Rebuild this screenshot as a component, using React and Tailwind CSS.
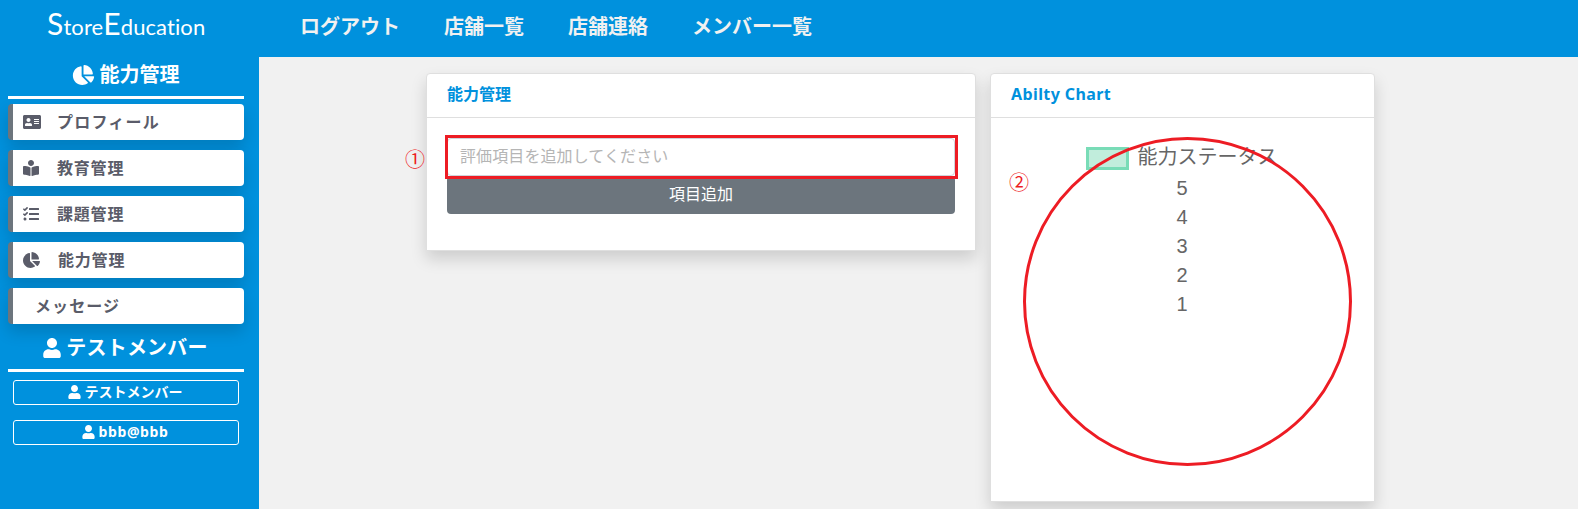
import { FaAddressCard, FaBookReader, FaTasks, FaChartPie, FaUser } from "react-icons/fa";

const NAV = ["ログアウト", "店舗一覧", "店舗連絡", "メンバー一覧"];

const MENU = [
  { label: "プロフィール", icon: <FaAddressCard className="h-4 w-[18px]" />, layout: "gap-4 pl-[10px] tracking-[1.2px]" },
  { label: "教育管理", icon: <FaBookReader className="h-4 w-4" />, layout: "gap-[18px] pl-[10px] tracking-[0.8px]" },
  { label: "課題管理", icon: <FaTasks className="h-4 w-4" />, layout: "gap-[18px] pl-[10px] tracking-[0.8px]" },
  { label: "能力管理", icon: <FaChartPie className="h-4 w-[17px]" />, layout: "gap-[18px] pl-[10px] tracking-[0.8px]" },
  { label: "メッセージ", icon: null, layout: "pl-[22px] tracking-[1.1px]" },
];

function SideHeading({ children }) {
  return (
    <h2 className="flex h-[39px] shrink-0 items-center justify-center gap-[5px] border-b-3 border-white pr-[1px] pb-[6px] text-xl leading-none font-bold text-white">
      {children}
    </h2>
  );
}

function Card({ title, className, titleClass = "", children }) {
  return (
    <section
      className={`relative flex flex-col rounded-t-[4px] border border-[#dfdfdf] bg-white shadow-[0_8px_16px_rgba(0,0,0,0.15)] ${className}`}
    >
      <h3 className={`flex h-[44px] shrink-0 items-center border-b border-[#dfdfdf] px-5 pb-[3px] text-base leading-none font-bold text-[#0091dd] ${titleClass}`}>
        {title}
      </h3>
      {children}
    </section>
  );
}

function AbilityChart() {
  return (
    <svg viewBox="0 0 383 383" className="h-[383px] w-full" fill="#666">
      <rect x="96.5" y="30.5" width="40" height="20" fill="#c1eddc" stroke="#79dcb7" strokeWidth="3" />
      <text x="146.5" y="46" fontSize="20">能力ステータス</text>
      <g className="font-['Liberation_Sans',sans-serif]" fontSize="20" textAnchor="middle">
        <text x="191" y="77">5</text>
        <text x="191" y="106">4</text>
        <text x="191" y="135">3</text>
        <text x="191" y="164">2</text>
        <text x="191" y="193">1</text>
      </g>
    </svg>
  );
}

export default function App() {
  return (
    <div className="flex h-[509px] w-[1578px] flex-col overflow-hidden bg-[#f1f1f1] font-['Noto_Sans','Noto_Sans_CJK_JP',sans-serif]">
      <header className="flex h-[57px] shrink-0 items-center bg-[#0091dd]">
        <div className="w-[300px] pb-[11px] pl-[47px] font-['Lato',sans-serif] text-[22px] leading-none font-normal tracking-[0.1px] text-white [font-variant-ligatures:none]">
          <span className="text-[30px]">S</span>tore<span className="text-[30px]">E</span>ducation
        </div>
        <nav className="flex gap-11 pb-[3px] text-xl leading-none font-bold text-[#f1f1f1]">
          {NAV.map((item) => (
            <a key={item} className="whitespace-nowrap">{item}</a>
          ))}
        </nav>
      </header>
      <div className="flex min-h-0 flex-1">
        <aside className="flex w-[259px] shrink-0 flex-col bg-[#0091dd] pr-[15px] pl-2">
          <div className="flex flex-col pt-[3px] pb-[5px]">
            <SideHeading>
              <FaChartPie className="h-5 w-[23px]" />
              能力管理
            </SideHeading>
          </div>
          <ul className="flex flex-col gap-[10px]">
            {MENU.map(({ label, icon, layout }) => (
              <li
                key={label}
                className={`flex h-9 items-center rounded-[4px] border-l-5 border-[#6c757d] bg-white text-base leading-none font-bold text-[#5a5c69] shadow-[0_8px_16px_rgba(0,0,0,0.15)] ${layout}`}
              >
                {icon}
                <span>{label}</span>
              </li>
            ))}
          </ul>
          <div className="mt-[9px] flex flex-col">
            <SideHeading>
              <FaUser className="h-5 w-[18px]" />
              <span className="tracking-[0.2px]">テストメンバー</span>
            </SideHeading>
          </div>
          <div className="mt-2 flex flex-col gap-[15px] px-[5px] text-sm leading-none font-bold text-white">
            <a className="flex h-[25px] items-center justify-center gap-1 rounded-[3px] border border-white pr-[2px] pb-[2px]">
              <FaUser className="h-[14px] w-[13px]" />テストメンバー
            </a>
            <a className="flex h-[25px] items-center justify-center gap-1 rounded-[3px] border border-white pr-[2px] pb-[2px]">
              <FaUser className="h-[14px] w-[13px]" />
              <span className="tracking-[0.6px]">bbb@bbb</span>
            </a>
          </div>
        </aside>
        <main className="flex flex-1 items-start gap-[14px] pt-4 pl-[167px]">
          <Card title="能力管理" className="h-[178px] w-[550px]">
            <div className="flex flex-col px-5 pt-5">
              <div className="flex h-[38px] items-center rounded-[4px] border border-[#ced4da] px-3 pb-[2px] text-base leading-none tracking-[0.1px] text-[#b5b5b5]">
                評価項目を追加してください
              </div>
              <button className="h-[38px] rounded-[4px] bg-[#6c757d] pb-[2px] text-base leading-none text-white">
                項目追加
              </button>
            </div>
            <div className="absolute top-[61px] left-[18px] h-[44px] w-[513px] border-3 border-[#ed1c24]" />
            <span className="absolute top-[76px] left-[-22px] text-xl leading-none text-[#ed1c24]">①</span>
          </Card>
          <Card title="Abilty Chart" titleClass="tracking-[0.4px]" className="h-[429px] w-[385px]">
            <AbilityChart />
            <div className="absolute top-[63px] left-[32px] h-[329px] w-[329px] rounded-full border-3 border-[#ed1c24]" />
            <span className="absolute top-[99px] left-[18px] text-xl leading-none text-[#ed1c24]">②</span>
          </Card>
        </main>
      </div>
    </div>
  );
}
